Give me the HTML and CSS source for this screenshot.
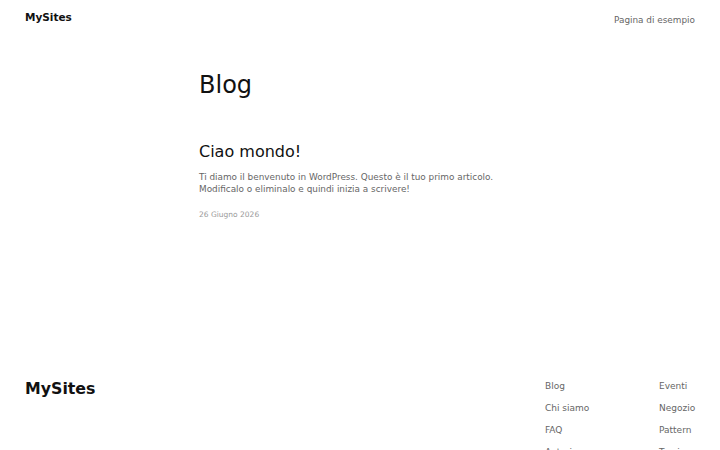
FILE: index.html
```html
<!DOCTYPE html>
<html lang="it">
<head>
<meta charset="utf-8">
<title>Blog – MySites</title>
<link rel="stylesheet" href="styles.css">
</head>
<body>
<header class="site-header">
  <a class="site-title" href="#">MySites</a>
  <nav class="header-nav"><a href="#">Pagina di esempio</a></nav>
</header>
<main class="content">
  <h1 class="page-title">Blog</h1>
  <article class="post">
    <h2 class="post-title">Ciao mondo!</h2>
    <p class="post-excerpt">Ti diamo il benvenuto in WordPress. Questo è il tuo primo articolo. Modificalo o eliminalo e quindi inizia a scrivere!</p>
    <div class="post-date">26 Giugno 2026</div>
  </article>
</main>
<footer class="site-footer">
  <div class="footer-title">MySites</div>
  <div class="footer-navs">
    <ul class="footer-col">
      <li><a href="#">Blog</a></li>
      <li><a href="#">Chi siamo</a></li>
      <li><a href="#">FAQ</a></li>
      <li><a href="#">Autori</a></li>
    </ul>
    <ul class="footer-col">
      <li><a href="#">Eventi</a></li>
      <li><a href="#">Negozio</a></li>
      <li><a href="#">Pattern</a></li>
      <li><a href="#">Temi</a></li>
    </ul>
  </div>
</footer>
</body>
</html>
```
FILE: styles.css
```css
* { box-sizing: border-box; }
html, body { margin: 0; padding: 0; background: #fff; }
body {
  font-family: "DejaVu Sans", sans-serif;
  color: #111;
  width: 720px;
  height: 450px;
  overflow: hidden;
}
a { color: inherit; text-decoration: none; }

.site-header {
  display: flex;
  justify-content: space-between;
  align-items: center;
  padding: 0 25px;
  height: 34px;
}
.site-title {
  font-weight: bold;
  font-size: 10.5px;
  color: #111;
}
.header-nav a {
  font-size: 8.9px;
  color: #666;
}

.content {
  width: 322px;
  margin: 0 auto;
  padding-top: 36px;
  height: 331px;
}
.page-title {
  margin: 0;
  font-weight: normal;
  font-size: 24px;
  line-height: 30px;
  color: #111;
}
.post { margin-top: 42px; }
.post-title {
  margin: 0;
  font-weight: normal;
  font-size: 16px;
  line-height: 20px;
  color: #111;
}
.post-excerpt {
  margin: 9px 0 0 0;
  font-size: 8.9px;
  line-height: 12px;
  color: #666;
}
.post-date {
  margin-top: 15px;
  font-size: 7.5px;
  color: #999;
}

.site-footer {
  display: flex;
  justify-content: space-between;
  padding: 10px 25px 0 25px;
}
.footer-title {
  font-weight: bold;
  font-size: 15.8px;
  line-height: 20px;
  padding-top: 4px;
}
.footer-navs {
  display: flex;
}
.footer-col {
  list-style: none;
  margin: 0;
  padding: 0;
  width: 114px;
}
.footer-col:last-child { width: 36px; }
.footer-col li {
  font-size: 9px;
  line-height: 22px;
  color: #666;
  white-space: nowrap;
}
```
